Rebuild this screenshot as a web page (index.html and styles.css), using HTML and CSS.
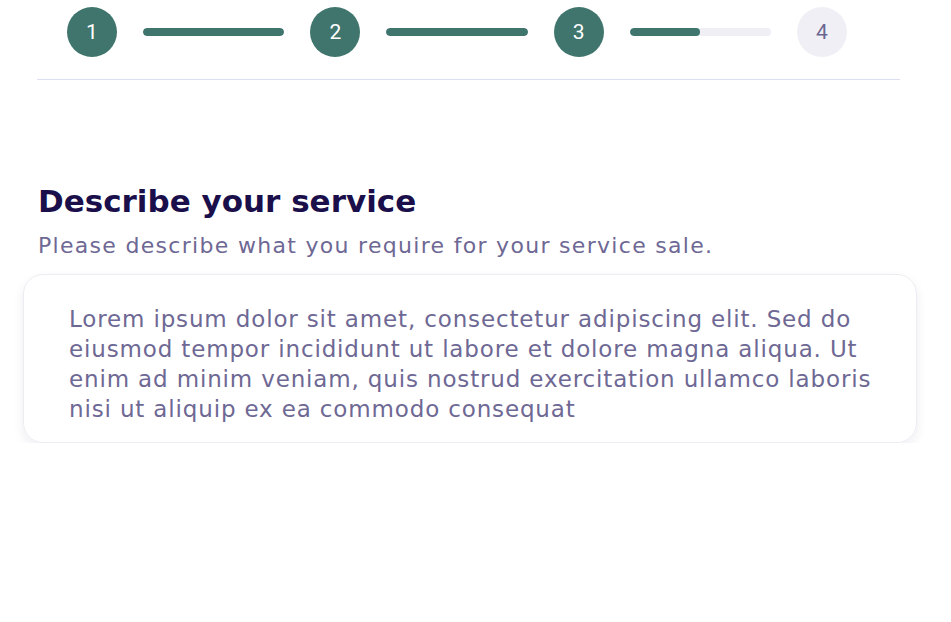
FILE: index.html
```html
<!DOCTYPE html>
<html lang="en">
<head>
<meta charset="utf-8">
<title>Describe your service</title>
<link rel="stylesheet" href="styles.css">
</head>
<body>
<div class="page">
  <div class="stepper">
    <div class="step done">1</div>
    <div class="bar"><div class="fill" style="width:100%"></div></div>
    <div class="step done">2</div>
    <div class="bar"><div class="fill" style="width:100%"></div></div>
    <div class="step done">3</div>
    <div class="bar"><div class="fill" style="width:50%"></div></div>
    <div class="step todo">4</div>
  </div>
  <div class="content">
    <h1 class="title">Describe your service</h1>
    <p class="subtitle">Please describe what you require for your service sale.</p>
    <div class="card">
      <p class="card-text">Lorem ipsum dolor sit amet, consectetur adipiscing elit. Sed do<br>eiusmod tempor incididunt ut labore et dolore magna aliqua. Ut<br>enim ad minim veniam, quis nostrud exercitation ullamco laboris<br>nisi ut aliquip ex ea commodo consequat</p>
    </div>
  </div>
</div>
</body>
</html>
```
FILE: styles.css
```css
* { box-sizing: border-box; }
html, body { margin: 0; padding: 0; background: #fff; }
body { font-family: "DejaVu Sans", "Noto Sans", sans-serif; }
.page { width: 951px; }
.stepper {
  margin: 0 51px 0 37px;
  padding: 7px 53px 22px 30px;
  border-bottom: 1px solid #dcdff0;
  display: flex;
  align-items: center;
  gap: 26px;
}
.step {
  width: 50px; height: 50px; border-radius: 50%;
  flex: none;
  display: flex; align-items: center; justify-content: center;
  font-family: Roboto, sans-serif;
  font-size: 21px;
}
.step.done { background: #3f756d; color: #fff; }
.step.todo { background: #efeff5; color: #6b6591; }
.bar { flex: 1; height: 8px; border-radius: 4px; background: #efeff5; overflow: hidden; }
.fill { height: 100%; background: #3f756d; border-radius: 4px; }
.content { padding: 101px 34px 0 23px; }
.title {
  margin: 0 0 10px 15px;
  font-size: 31px; font-weight: 700; color: #1a0f4a; line-height: 40px;
}
.subtitle {
  margin: 0 0 13px 15px;
  font-size: 22px; color: #6e6894; line-height: 30px;
  letter-spacing: 1.3px;
}
.card {
  border: 1px solid #ececf2;
  border-radius: 20px;
  box-shadow: 0 5px 12px rgba(30, 20, 80, 0.07);
  padding: 29px 20px 22px 45px;
  height: 169px;
}
.card-text {
  margin: 0;
  font-size: 23px; line-height: 30px; color: #6e6894;
  letter-spacing: 0.85px;
  white-space: nowrap;
}
```
